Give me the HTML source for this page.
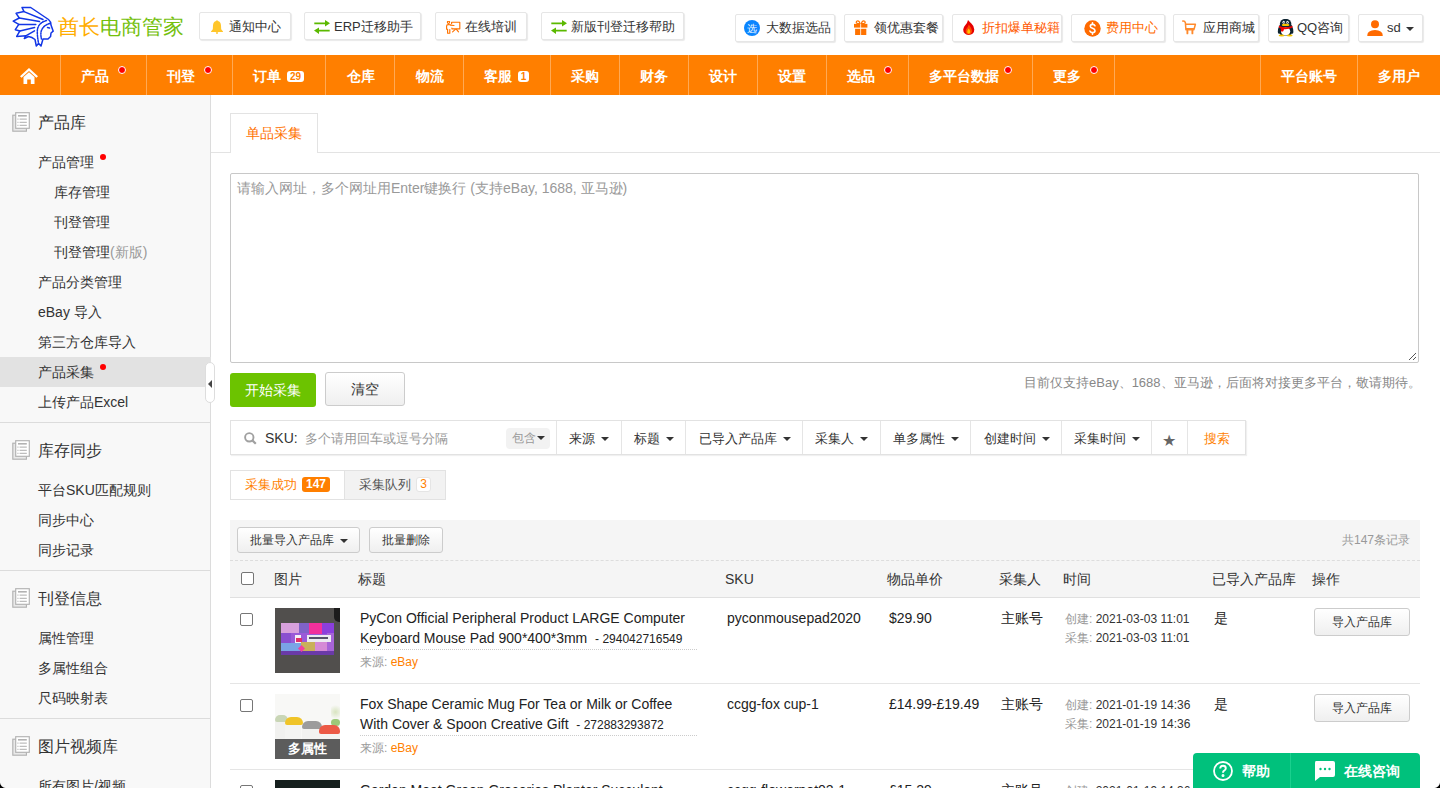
<!DOCTYPE html>
<html><head><meta charset="utf-8">
<style>
*{box-sizing:border-box;margin:0;padding:0}
html,body{width:1440px;height:788px;overflow:hidden;background:#fff;font-family:"Liberation Sans",sans-serif;color:#333}
.a{position:absolute}
.hb{position:absolute;height:28px;border:1px solid #e6e6e6;border-radius:2px;background:#fff;box-shadow:1px 1px 1px rgba(0,0,0,.09);font-size:13px;line-height:26px;color:#333;white-space:nowrap}
.hb .ic{position:absolute;top:0;bottom:0;margin:auto 0}
.hb .t{position:absolute;top:0}
.hl .t{top:1px}
#nav{position:absolute;left:0;top:55px;width:1440px;height:40px;background:#ff7f00}
.sep{position:absolute;top:0;width:1px;height:40px;background:#ffa954}
.nt{position:absolute;top:1px;line-height:40px;font-size:14px;font-weight:bold;color:#fff;white-space:nowrap}
.dot{position:absolute;width:8px;height:8px;border-radius:50%;background:#f00;border:1px solid #fff}
#side{position:absolute;left:0;top:95px;width:211px;height:693px;background:#f8f8f8;border-right:1px solid #dcdcdc}
.sh{position:absolute;left:38px;font-size:16px;color:#333;line-height:20px;white-space:nowrap}
.si{position:absolute;left:38px;font-size:14px;color:#333;line-height:20px;white-space:nowrap}
.si2{left:54px}
.sdiv{position:absolute;left:0;width:210px;height:1px;background:#dcdcdc}
.dd{position:absolute;top:422px;height:33px;line-height:33px;font-size:13px;color:#333;white-space:nowrap}
.caret{display:inline-block;width:0;height:0;border-left:4px solid transparent;border-right:4px solid transparent;border-top:4px solid #333;vertical-align:middle;margin-left:6px;position:relative;top:-1px}
.vs{position:absolute;top:421px;width:1px;height:33px;background:#e5e5e5}
.th{position:absolute;top:570px;font-size:14px;color:#333;line-height:18px;white-space:nowrap}
.cb{position:absolute;width:13px;height:13px;border:1px solid #767676;border-radius:2px;background:#fff}
.td{position:absolute;font-size:14px;color:#222;white-space:nowrap;line-height:20px}
.gb{position:absolute;border:1px solid #ccc;border-radius:3px;background:linear-gradient(#fff,#efefef);font-size:12px;color:#333;text-align:center;white-space:nowrap}
</style></head><body>

<!-- HEADER -->
<div id="hdr" class="a" style="left:0;top:0;width:1440px;height:55px;background:#fff">
  <svg class="a" style="left:10px;top:4px" width="48" height="46" viewBox="0 0 48 46" fill="none" stroke="#1236e6" stroke-width="1.5" stroke-linejoin="round" stroke-linecap="round">
<path d="M12 3.5 L20.7 3.5 L38.5 15.5 Q41 17.5 41 21 L43.2 27.2 L41 29 L40.6 32.5 L38 35 L33 35 L31 42 L28.6 39.5 L26.3 42 L25 35.5 Q22 33 18.5 32.5 L14.3 34.5 L15.8 31.8 L6.7 32.4 L9.9 26.9 L5.3 25.7 L8.8 20.4 L3.2 17.2 L9.3 14 L6.1 9.3 L14 7.6 Z"/>
<path d="M14 7.6 L33 15.5 M9.3 14 L29.5 17.5 M8.8 20.4 L25.8 20.5 M9.9 26.9 L24.6 23.6 M15.8 31.8 L24.5 26.8"/>
<path d="M36.5 16.6 Q29 18.5 27.5 25 Q26.8 30 28.6 39.5" stroke-dasharray="1.6 1.1"/>
<path d="M39.8 19.5 Q32.5 21.5 31 28 Q30.6 31.5 31.5 35" stroke-dasharray="1.6 1.1"/>
<path d="M37.5 23.5 L39.5 24"/>
</svg>
  <div class="a" style="left:58px;top:14px;font-size:21px;line-height:26px;white-space:nowrap"><span style="color:#ffad00">酋长</span><span style="color:#74c00c">电商管家</span></div>

  <div class="hb hl" style="left:199px;top:12px;width:92px">
    <svg class="a" style="left:11px;top:7px" width="12" height="14" viewBox="0 0 12 14"><path d="M6 0.2 Q6.8 0.2 6.9 1.1 Q9.8 1.7 10 5.5 L10.2 9.2 L12 11.6 V12 H0 V11.6 L1.8 9.2 L2 5.5 Q2.2 1.7 5.1 1.1 Q5.2 0.2 6 0.2 Z" fill="#ffc62b"/><path d="M4.8 12.2 H7.2 Q7.2 14 6 14 Q4.8 14 4.8 12.2Z" fill="#ffc62b"/></svg>
    <span class="t" style="left:29px">通知中心</span></div>
  <div class="hb hl" style="left:304px;top:12px;width:117px">
    <svg class="a" style="left:9px;top:7px" width="16" height="14" viewBox="0 0 16 14" fill="#5bb900"><path d="M0.3 2.6 H11 V0 L16 3.3 L11 6.4 V4.2 H0.3 Z M15.7 9.8 H5 V7.4 L0 10.6 L5 13.9 V11.4 H15.7 Z"/></svg>
    <span class="t" style="left:29px">ERP迁移助手</span></div>
  <div class="hb hl" style="left:435px;top:12px;width:92px">
    <svg class="a" style="left:10px;top:8px" width="15" height="13" viewBox="0 0 15 13" fill="none" stroke="#ff7300" stroke-width="1.15" stroke-linejoin="round" stroke-linecap="round"><circle cx="2.5" cy="1.3" r="1.1"/><path d="M4.6 3.8 L2.2 3.6 Q0.6 3.6 0.6 5 V8.2 H1.6 V12.2 H3.8 V8.6 M4.3 4.1 L8 4.5"/><path d="M5.6 2.8 V1.2 H13.8 V7.8 H5.9 V7"/><path d="M9.3 8.3 L6.6 10.9 M10.5 8.3 L12.5 10.9"/></svg>
    <span class="t" style="left:29px">在线培训</span></div>
  <div class="hb hl" style="left:541px;top:12px;width:143px">
    <svg class="a" style="left:9px;top:7px" width="16" height="14" viewBox="0 0 16 14" fill="#5bb900"><path d="M0.3 2.6 H11 V0 L16 3.3 L11 6.4 V4.2 H0.3 Z M15.7 9.8 H5 V7.4 L0 10.6 L5 13.9 V11.4 H15.7 Z"/></svg>
    <span class="t" style="left:29px">新版刊登迁移帮助</span></div>

  <div class="hb" style="left:735px;top:14px;width:100px">
    <svg class="a" style="left:8px;top:5px" width="16" height="16" viewBox="0 0 16 16"><circle cx="8" cy="8" r="8" fill="#0a85ff"/><text x="8.2" y="11.8" font-size="10" fill="#fff" text-anchor="middle">选</text></svg>
    <span class="t" style="left:30px">大数据选品</span></div>
  <div class="hb" style="left:844px;top:14px;width:99px">
    <svg class="a" style="left:9px;top:5px" width="14" height="15" viewBox="0 0 14 15" fill="#ff7300"><path d="M6.6 3.6 Q6 0.2 3.6 0.2 Q1.4 0.4 1.6 2.4 Q1.8 3.6 3.2 3.9 H6.6 Z M3.6 1.5 Q4.9 1.6 5.2 3 H3.7 Q2.7 2.8 2.8 2.1 Q2.9 1.5 3.6 1.5 Z"/><path d="M6.8 3.6 Q7.4 0.2 9.8 0.2 Q12 0.4 11.8 2.4 Q11.6 3.6 10.2 3.9 H6.8 Z M9.8 1.5 Q8.5 1.6 8.2 3 H9.7 Q10.7 2.8 10.6 2.1 Q10.5 1.5 9.8 1.5 Z"/><rect x="0" y="3.9" width="6.3" height="3.7"/><rect x="7.1" y="3.9" width="6.3" height="3.7"/><rect x="1.1" y="8.8" width="5.2" height="6.2"/><rect x="7.1" y="8.8" width="5.2" height="6.2"/></svg>
    <span class="t" style="left:29px">领优惠套餐</span></div>
  <div class="hb" style="left:952px;top:14px;width:110px;color:#ff5a00">
    <svg class="a" style="left:10px;top:5px" width="12" height="15" viewBox="0 0 12 15"><path d="M5 0 Q4.6 2.6 2.2 5.2 Q0.2 7.4 0.2 9.6 Q0.3 14.6 5.6 15 Q11.2 14.8 11.3 9.6 Q11.3 6.2 8.6 3.8 Q6.4 1.8 5 0 Z" fill="#e60000"/><path d="M5.8 4.4 Q5.2 6.6 3.6 8.4 Q2.4 9.8 2.6 11.4 Q3 14.4 5.7 14.4 Q8.8 14.3 9 11.2 Q9 8.6 5.8 4.4Z" fill="#ff4a00"/><path d="M5.7 8.6 Q4.2 10.6 4.2 12 Q4.4 13.8 5.7 13.8 Q7.2 13.8 7.3 12 Q7.3 10.6 5.7 8.6Z" fill="#ffc400"/></svg>
    <span class="t" style="left:29px">折扣爆单秘籍</span></div>
  <div class="hb" style="left:1071px;top:14px;width:94px;color:#ff6a00">
    <svg class="a" style="left:12px;top:5px" width="17" height="17" viewBox="0 0 17 17"><circle cx="8.5" cy="8.5" r="8.2" fill="#ff6a00"/><path d="M11 5.8 Q10.4 4.4 8.6 4.4 Q6.3 4.4 6.3 6.2 Q6.3 7.6 8.6 8.3 Q11 9 11 10.7 Q11 12.6 8.5 12.6 Q6.4 12.6 5.9 11.1 M8.5 2.8 V4.4 M8.5 12.6 V14.2" fill="none" stroke="#fff" stroke-width="1.6" stroke-linecap="round"/></svg>
    <span class="t" style="left:34px">费用中心</span></div>
  <div class="hb" style="left:1173px;top:14px;width:86px">
    <svg class="a" style="left:8px;top:5px" width="15" height="15" viewBox="0 0 15 15" fill="none" stroke="#ff8a2c" stroke-width="1.5" stroke-linejoin="round" stroke-linecap="round"><path d="M0.8 1.1 Q2.9 0.9 3.4 2.8 L3.9 9.8 H11.9 M3.7 4.3 H13.4 L12.2 8.8 H3.9"/><path d="M5.4 10.5 V13.4 M10.4 10.5 V13.4" stroke-width="1.9"/></svg>
    <span class="t" style="left:29px">应用商城</span></div>
  <div class="hb" style="left:1268px;top:14px;width:81px">
    <svg class="a" style="left:8px;top:4px" width="17" height="18" viewBox="0 0 17 18"><ellipse cx="8.6" cy="5" rx="5.8" ry="5.2" fill="#0e2430"/><path d="M2.6 6 Q0.8 9.5 0.8 13 Q1 15.2 2.4 14.6 Q3.4 16.8 8.6 16.8 Q13.8 16.8 14.8 14.6 Q16.2 15.2 16.4 13 Q16.4 9.5 14.6 6 Z" fill="#0e2430"/><ellipse cx="8.6" cy="12.4" rx="4.6" ry="4.1" fill="#fff"/><ellipse cx="6.7" cy="3.2" rx="1.2" ry="1.5" fill="#fff"/><ellipse cx="10.5" cy="3.2" rx="1.2" ry="1.5" fill="#fff"/><ellipse cx="6.9" cy="3.5" rx=".5" ry=".7" fill="#0e2430"/><ellipse cx="10.3" cy="3.5" rx=".5" ry=".7" fill="#0e2430"/><ellipse cx="8.6" cy="5.9" rx="3.8" ry="1.2" fill="#f5c400"/><path d="M1.8 6.8 Q8.6 9.8 15.4 6.8 L15.6 8.6 Q11 10.6 7 10.2 L6.4 12 Q5.6 13 4 12.2 L3.8 9.4 Q2.6 9 1.9 8.4 Z" fill="#f20000"/><ellipse cx="4.6" cy="16.5" rx="3" ry="1.1" fill="#f5c400"/><ellipse cx="12.6" cy="16.5" rx="3" ry="1.1" fill="#f5c400"/></svg>
    <span class="t" style="left:28px">QQ咨询</span></div>
  <div class="hb" style="left:1358px;top:14px;width:65px">
    <svg class="a" style="left:8px;top:5px" width="16" height="16" viewBox="0 0 16 16" fill="#ff6a00"><circle cx="8" cy="4.3" r="4"/><path d="M0.2 15.5 Q0.6 10.2 8 10.1 Q15.4 10.2 15.8 15.5 Q15.8 15.9 15.3 15.9 H0.7 Q0.2 15.9 0.2 15.5 Z"/></svg>
    <span class="t" style="left:28px">sd</span><span class="a" style="left:47px;top:12px;width:0;height:0;border-left:4px solid transparent;border-right:4px solid transparent;border-top:4px solid #333"></span></div>
</div>

<!-- NAV -->
<div id="nav">
<svg class="a" style="left:20px;top:13px" width="18" height="16" viewBox="0 0 18 16" fill="#fff"><path d="M9 0 L18 8.2 L16.4 9.8 L9 3 L1.6 9.8 L0 8.2 Z M3.5 9 L9 4.2 L14.5 9 V16 H10.8 V11.5 H7.2 V16 H3.5 Z"/></svg>
<div class="sep" style="left:60px"></div>
<div class="sep" style="left:146px"></div>
<div class="sep" style="left:232px"></div>
<div class="sep" style="left:325px"></div>
<div class="sep" style="left:394px"></div>
<div class="sep" style="left:463px"></div>
<div class="sep" style="left:550px"></div>
<div class="sep" style="left:619px"></div>
<div class="sep" style="left:688px"></div>
<div class="sep" style="left:757px"></div>
<div class="sep" style="left:826px"></div>
<div class="sep" style="left:908px"></div>
<div class="sep" style="left:1032px"></div>
<div class="sep" style="left:1114px"></div>
<div class="sep" style="left:1260px"></div>
<div class="sep" style="left:1357px"></div>
<div class="nt" style="left:81px">产品</div>
<div class="dot" style="left:118px;top:11px"></div>
<div class="nt" style="left:167px">刊登</div>
<div class="dot" style="left:204px;top:11px"></div>
<div class="nt" style="left:253px">订单</div>
<div class="nt" style="left:347px">仓库</div>
<div class="nt" style="left:416px">物流</div>
<div class="nt" style="left:484px">客服</div>
<div class="nt" style="left:571px">采购</div>
<div class="nt" style="left:640px">财务</div>
<div class="nt" style="left:709px">设计</div>
<div class="nt" style="left:778px">设置</div>
<div class="nt" style="left:847px">选品</div>
<div class="dot" style="left:884px;top:11px"></div>
<div class="nt" style="left:929px">多平台数据</div>
<div class="dot" style="left:1004px;top:11px"></div>
<div class="nt" style="left:1053px">更多</div>
<div class="dot" style="left:1090px;top:11px"></div>
<div class="nt" style="left:1281px">平台账号</div>
<div class="nt" style="left:1378px">多用户</div>
<div class="a" style="left:287px;top:16px;width:17px;height:11px;background:#fff;border-radius:3px;color:#ff7f00;font-size:10px;font-weight:bold;line-height:11px;text-align:center">29</div>
<div class="a" style="left:518px;top:16px;width:11px;height:11px;background:#fff;border-radius:3px;color:#ff7f00;font-size:10px;font-weight:bold;line-height:11px;text-align:center">1</div>
</div>
<!-- SIDEBAR -->
<div id="side">
<div class="a" style="left:0;top:262px;width:211px;height:30px;background:#e2e2e2"></div>
<svg class="a" style="left:12px;top:17px" width="19" height="21" viewBox="0 0 19 21" fill="none" stroke="#b2b2b2" stroke-width="1.15"><rect x="0.8" y="3.2" width="13.6" height="16" fill="#e9e9e9"/><rect x="3.7" y="0.7" width="13.6" height="15.6" fill="#fff"/><path d="M6 3.8 H14.8" stroke-width="1.6"/><path d="M5.4 7.2 H6.5 M7.6 7.2 H14.8 M5.4 10.3 H6.5 M7.6 10.3 H14.8 M5.4 13.4 H6.5 M7.6 13.4 H14.8" stroke="#bdbdbd" stroke-width="1.2"/></svg>
<div class="sh" style="top:18px">产品库</div>
<div class="si" style="top:57px">产品管理</div>
<div class="a" style="left:100px;top:59px;width:6px;height:6px;border-radius:50%;background:#f00"></div>
<div class="si si2" style="top:87px">库存管理</div>
<div class="si si2" style="top:117px">刊登管理</div>
<div class="si si2" style="top:147px">刊登管理<span style="color:#999">(新版)</span></div>
<div class="si" style="top:177px">产品分类管理</div>
<div class="si" style="top:207px">eBay 导入</div>
<div class="si" style="top:237px">第三方仓库导入</div>
<div class="si" style="top:267px">产品采集</div>
<div class="a" style="left:100px;top:269px;width:6px;height:6px;border-radius:50%;background:#f00"></div>
<div class="si" style="top:297px">上传产品Excel</div>
<div class="sdiv" style="top:327px"></div>
<svg class="a" style="left:12px;top:345px" width="19" height="21" viewBox="0 0 19 21" fill="none" stroke="#b2b2b2" stroke-width="1.15"><rect x="0.8" y="3.2" width="13.6" height="16" fill="#e9e9e9"/><rect x="3.7" y="0.7" width="13.6" height="15.6" fill="#fff"/><path d="M6 3.8 H14.8" stroke-width="1.6"/><path d="M5.4 7.2 H6.5 M7.6 7.2 H14.8 M5.4 10.3 H6.5 M7.6 10.3 H14.8 M5.4 13.4 H6.5 M7.6 13.4 H14.8" stroke="#bdbdbd" stroke-width="1.2"/></svg>
<div class="sh" style="top:346px">库存同步</div>
<div class="si" style="top:385px">平台SKU匹配规则</div>
<div class="si" style="top:415px">同步中心</div>
<div class="si" style="top:445px">同步记录</div>
<div class="sdiv" style="top:475px"></div>
<svg class="a" style="left:12px;top:493px" width="19" height="21" viewBox="0 0 19 21" fill="none" stroke="#b2b2b2" stroke-width="1.15"><rect x="0.8" y="3.2" width="13.6" height="16" fill="#e9e9e9"/><rect x="3.7" y="0.7" width="13.6" height="15.6" fill="#fff"/><path d="M6 3.8 H14.8" stroke-width="1.6"/><path d="M5.4 7.2 H6.5 M7.6 7.2 H14.8 M5.4 10.3 H6.5 M7.6 10.3 H14.8 M5.4 13.4 H6.5 M7.6 13.4 H14.8" stroke="#bdbdbd" stroke-width="1.2"/></svg>
<div class="sh" style="top:494px">刊登信息</div>
<div class="si" style="top:533px">属性管理</div>
<div class="si" style="top:563px">多属性组合</div>
<div class="si" style="top:593px">尺码映射表</div>
<div class="sdiv" style="top:623px"></div>
<svg class="a" style="left:12px;top:641px" width="19" height="21" viewBox="0 0 19 21" fill="none" stroke="#b2b2b2" stroke-width="1.15"><rect x="0.8" y="3.2" width="13.6" height="16" fill="#e9e9e9"/><rect x="3.7" y="0.7" width="13.6" height="15.6" fill="#fff"/><path d="M6 3.8 H14.8" stroke-width="1.6"/><path d="M5.4 7.2 H6.5 M7.6 7.2 H14.8 M5.4 10.3 H6.5 M7.6 10.3 H14.8 M5.4 13.4 H6.5 M7.6 13.4 H14.8" stroke="#bdbdbd" stroke-width="1.2"/></svg>
<div class="sh" style="top:642px">图片视频库</div>
<div class="si" style="top:681px">所有图片/视频</div>
<div class="a" style="left:205px;top:267px;width:10px;height:41px;background:#fff;border:1px solid #ddd;border-radius:5px"></div>
<div class="a" style="left:208px;top:285px;width:0;height:0;border-top:4px solid transparent;border-bottom:4px solid transparent;border-right:4px solid #444"></div>
</div>
<!-- MAIN -->
<div class="a" style="left:211px;top:152px;width:1229px;height:1px;background:#e3e3e3"></div>
<div class="a" style="left:230px;top:113px;width:88px;height:40px;background:#fff;border:1px solid #e3e3e3;border-bottom:none"></div>
<div class="a" style="left:246px;top:123px;font-size:14px;line-height:20px;color:#ff7200">单品采集</div>

<div class="a" style="left:230px;top:173px;width:1189px;height:190px;border:1px solid #c8c8c8;border-radius:2px;background:#fff"></div>
<div class="a" style="left:237px;top:178px;font-size:14px;line-height:20px;color:#999;white-space:nowrap">请输入网址，多个网址用Enter键换行 (支持eBay, 1688, 亚马逊)</div>
<svg class="a" style="left:1408px;top:352px" width="9" height="9" viewBox="0 0 9 9" stroke="#555" stroke-width="1"><path d="M1 8 L8 1 M5 8 L8 5"/></svg>

<div class="a" style="left:230px;top:373px;width:86px;height:34px;background:#6cc300;border-radius:3px;color:#fff;font-size:14px;line-height:34px;text-align:center">开始采集</div>
<div class="gb" style="left:325px;top:372px;width:80px;height:34px;line-height:32px;font-size:14px">清空</div>
<div class="a" style="left:1024px;top:373px;font-size:13px;line-height:20px;color:#888;white-space:nowrap">目前仅支持eBay、1688、亚马逊，后面将对接更多平台，敬请期待。</div>

<!-- search bar -->
<div class="a" style="left:230px;top:420px;width:1016px;height:35px;border:1px solid #e2e2e2;background:#fff;box-shadow:1px 1px 1px rgba(0,0,0,.06)"></div>
<svg class="a" style="left:244px;top:432px" width="13" height="13" viewBox="0 0 13 13" fill="none" stroke="#a0a0a0" stroke-width="1.9"><circle cx="5.3" cy="5.3" r="4.2"/><path d="M8.4 8.4 L11.8 11.8" stroke-width="2.2"/></svg>
<div class="dd" style="left:265px;font-size:14px">SKU:</div>
<div class="dd" style="left:305px;color:#999">多个请用回车或逗号分隔</div>
<div class="a" style="left:506px;top:428px;width:44px;height:21px;background:#f2f2f2;border-radius:4px;font-size:12px;line-height:21px;color:#999;padding-left:6px;white-space:nowrap">包含<span class="caret" style="margin-left:1px;border-top-color:#333"></span></div>
<div class="vs" style="left:556px"></div>
<div class="dd" style="left:569px">来源<span class="caret"></span></div>
<div class="vs" style="left:621px"></div>
<div class="dd" style="left:634px">标题<span class="caret"></span></div>
<div class="vs" style="left:685px"></div>
<div class="dd" style="left:699px">已导入产品库<span class="caret"></span></div>
<div class="vs" style="left:802px"></div>
<div class="dd" style="left:815px">采集人<span class="caret"></span></div>
<div class="vs" style="left:880px"></div>
<div class="dd" style="left:893px">单多属性<span class="caret"></span></div>
<div class="vs" style="left:970px"></div>
<div class="dd" style="left:984px">创建时间<span class="caret"></span></div>
<div class="vs" style="left:1061px"></div>
<div class="dd" style="left:1074px">采集时间<span class="caret"></span></div>
<div class="vs" style="left:1151px"></div>
<div class="dd" style="left:1162px;top:424px;font-size:16px;color:#666">★</div>
<div class="vs" style="left:1187px"></div>
<div class="dd" style="left:1204px;color:#ff7f00">搜索</div>

<!-- status tabs -->
<div class="a" style="left:230px;top:470px;width:216px;height:30px;border:1px solid #e2e2e2;background:#f2f2f2"></div>
<div class="a" style="left:231px;top:471px;width:114px;height:28px;background:#fff;border-right:1px solid #e2e2e2"></div>
<div class="a" style="left:245px;top:475px;font-size:13px;line-height:20px;color:#ff7f00;white-space:nowrap">采集成功</div>
<div class="a" style="left:302px;top:477px;width:28px;height:15px;border-radius:3px;background:#ff7f00;color:#fff;font-size:12px;font-weight:bold;line-height:15px;text-align:center">147</div>
<div class="a" style="left:359px;top:475px;font-size:13px;line-height:20px;color:#555;white-space:nowrap">采集队列</div>
<div class="a" style="left:416px;top:477px;width:15px;height:15px;border-radius:3px;background:#fff;border:1px solid #e5e5e5;color:#ff7f00;font-size:12px;line-height:13px;text-align:center">3</div>

<!-- table -->
<div class="a" style="left:230px;top:520px;width:1190px;height:78px;background:#f5f5f5"></div>
<div class="a" style="left:230px;top:560px;width:1190px;height:0;border-top:1px dashed #ddd"></div>
<div class="a" style="left:230px;top:597px;width:1190px;height:1px;background:#e0e0e0"></div>
<div class="gb" style="left:237px;top:527px;width:123px;height:26px;line-height:25px;text-align:left;padding-left:12px">批量导入产品库<span class="caret" style="margin-left:6px;top:0"></span></div>
<div class="gb" style="left:369px;top:527px;width:74px;height:26px;line-height:25px">批量删除</div>
<div class="a" style="left:1342px;top:531px;font-size:12px;line-height:18px;color:#999;white-space:nowrap">共147条记录</div>

<div class="cb" style="left:241px;top:572px"></div>
<div class="th" style="left:274px">图片</div>
<div class="th" style="left:358px">标题</div>
<div class="th" style="left:725px">SKU</div>
<div class="th" style="left:887px">物品单价</div>
<div class="th" style="left:999px">采集人</div>
<div class="th" style="left:1063px">时间</div>
<div class="th" style="left:1212px">已导入产品库</div>
<div class="th" style="left:1312px">操作</div>

<!-- ROWS -->
<div class="a" style="left:230px;top:683px;width:1190px;height:1px;background:#e5e5e5"></div>
<div class="cb" style="left:240px;top:613px"></div>
<div class="a" style="left:275px;top:608px;width:65px;height:65px;background:#514f4d;overflow:hidden">
<div class="a" style="left:59px;top:0;width:6px;height:14px;background:#1c1c1c;border-radius:0 0 0 5px"></div>
<div class="a" style="left:6px;top:15px;width:53px;height:32px;background:#9a5ad8"></div>
<div class="a" style="left:6px;top:15px;width:18px;height:10px;background:#d7a0dc"></div>
<div class="a" style="left:24px;top:15px;width:10px;height:10px;background:#7f62c8"></div>
<div class="a" style="left:34px;top:15px;width:13px;height:11px;background:#f2309c"></div>
<div class="a" style="left:47px;top:15px;width:12px;height:11px;background:#8b3fdc"></div>
<div class="a" style="left:6px;top:25px;width:10px;height:10px;background:#8a4fd0"></div>
<div class="a" style="left:6px;top:35px;width:20px;height:9px;background:#7aa4e6"></div>
<div class="a" style="left:26px;top:34px;width:14px;height:9px;background:#c9b05a"></div>
<div class="a" style="left:40px;top:34px;width:12px;height:9px;background:#d58ad6"></div>
<div class="a" style="left:52px;top:25px;width:7px;height:18px;background:#a764d8"></div>
<div class="a" style="left:6px;top:43px;width:53px;height:4px;background:#6a3aa8"></div>
<div class="a" style="left:20px;top:27px;width:6px;height:8px;background:#f4f0f8"></div>
<div class="a" style="left:21px;top:30px;width:6px;height:4px;background:#e0306a"></div>
<div class="a" style="left:32px;top:27px;width:24px;height:7px;background:#ecebf2"></div>
<div class="a" style="left:34px;top:29px;width:19px;height:2px;background:#55506a"></div>
<div class="a" style="left:24px;top:38px;width:5px;height:5px;background:#f040a0;transform:rotate(45deg)"></div>
</div>
<div class="td" style="left:360px;top:608px;line-height:20px">PyCon Official Peripheral Product LARGE Computer<br>Keyboard Mouse Pad 900*400*3mm&nbsp;&nbsp;<span style="font-size:12px">- 294042716549</span></div>
<div class="a" style="left:360px;top:649px;width:337px;height:0;border-top:1px dotted #ccc"></div>
<div class="a" style="left:360px;top:653px;font-size:12px;line-height:18px;color:#999;white-space:nowrap">来源: <span style="color:#ff7f00">eBay</span></div>
<div class="td" style="left:727px;top:608px">pyconmousepad2020</div>
<div class="td" style="left:889px;top:608px">$29.90</div>
<div class="td" style="left:1001px;top:608px">主账号</div>
<div class="a" style="left:1065px;top:610px;font-size:12px;line-height:19px;color:#333;white-space:nowrap"><span style="color:#999">创建:</span> 2021-03-03 11:01<br><span style="color:#999">采集:</span> 2021-03-03 11:01</div>
<div class="td" style="left:1214px;top:608px">是</div>
<div class="gb" style="left:1314px;top:608px;width:96px;height:28px;line-height:26px">导入产品库</div>
<div class="a" style="left:230px;top:769px;width:1190px;height:1px;background:#e5e5e5"></div>
<div class="cb" style="left:240px;top:699px"></div>
<div class="a" style="left:275px;top:694px;width:65px;height:65px;background:#f8f8f6;overflow:hidden">
<div class="a" style="left:56px;top:9px;width:9px;height:18px;background:radial-gradient(circle,#d8e4c0 0,#f8f8f6 70%)"></div>
<div class="a" style="left:0;top:27px;width:13px;height:20px;background:#f1f1ef"></div>
<div class="a" style="left:0;top:21px;width:13px;height:7px;background:#c9d6b6;border-radius:5px 5px 2px 2px"></div>
<div class="a" style="left:10px;top:30px;width:16px;height:20px;background:#f4f4f2"></div>
<div class="a" style="left:10px;top:23px;width:18px;height:8px;background:#f0c428;border-radius:6px 6px 2px 2px"></div>
<div class="a" style="left:27px;top:34px;width:18px;height:16px;background:#f2f2f0"></div>
<div class="a" style="left:27px;top:27px;width:20px;height:8px;background:#9c9c9c;border-radius:6px 6px 2px 2px"></div>
<div class="a" style="left:56px;top:25px;width:9px;height:7px;background:#9cc878;border-radius:4px"></div>
<div class="a" style="left:45px;top:38px;width:20px;height:12px;background:#f4f4f2"></div>
<div class="a" style="left:44px;top:31px;width:21px;height:9px;background:#ec5a46;border-radius:6px 6px 2px 2px"></div>

<div class="a" style="left:0;top:45px;width:65px;height:20px;background:#5c5c5c;color:#fff;font-size:13px;font-weight:bold;line-height:20px;text-align:center">多属性</div></div>
<div class="td" style="left:360px;top:694px;line-height:20px">Fox Shape Ceramic Mug For Tea or Milk or Coffee<br>With Cover &amp; Spoon Creative Gift&nbsp;&nbsp;<span style="font-size:12px">- 272883293872</span></div>
<div class="a" style="left:360px;top:735px;width:337px;height:0;border-top:1px dotted #ccc"></div>
<div class="a" style="left:360px;top:739px;font-size:12px;line-height:18px;color:#999;white-space:nowrap">来源: <span style="color:#ff7f00">eBay</span></div>
<div class="td" style="left:727px;top:694px">ccgg-fox cup-1</div>
<div class="td" style="left:889px;top:694px">£14.99-£19.49</div>
<div class="td" style="left:1001px;top:694px">主账号</div>
<div class="a" style="left:1065px;top:696px;font-size:12px;line-height:19px;color:#333;white-space:nowrap"><span style="color:#999">创建:</span> 2021-01-19 14:36<br><span style="color:#999">采集:</span> 2021-01-19 14:36</div>
<div class="td" style="left:1214px;top:694px">是</div>
<div class="gb" style="left:1314px;top:694px;width:96px;height:28px;line-height:26px">导入产品库</div>
<div class="a" style="left:230px;top:855px;width:1190px;height:1px;background:#e5e5e5"></div>
<div class="cb" style="left:240px;top:785px"></div>
<div class="a" style="left:275px;top:780px;width:65px;height:65px;background:#16201e"></div>
<div class="td" style="left:360px;top:780px;line-height:20px">Garden Meat Green Groceries Planter Succulent<br>Pot&nbsp;&nbsp;<span style="font-size:12px">- 272883293871</span></div>
<div class="a" style="left:360px;top:821px;width:337px;height:0;border-top:1px dotted #ccc"></div>
<div class="a" style="left:360px;top:825px;font-size:12px;line-height:18px;color:#999;white-space:nowrap">来源: <span style="color:#ff7f00">eBay</span></div>
<div class="td" style="left:727px;top:780px">ccgg-flowerpot02-1</div>
<div class="td" style="left:889px;top:780px">£15.29</div>
<div class="td" style="left:1001px;top:780px">主账号</div>
<div class="a" style="left:1065px;top:782px;font-size:12px;line-height:19px;color:#333;white-space:nowrap"><span style="color:#999">创建:</span> 2021-01-19 14:36<br><span style="color:#999">采集:</span> 2021-01-19 14:36</div>
<div class="td" style="left:1214px;top:780px">是</div>
<div class="gb" style="left:1314px;top:780px;width:96px;height:28px;line-height:26px">导入产品库</div>
<!-- HELP -->
<div class="a" style="left:1193px;top:753px;width:227px;height:40px;background:#00c17c;border-radius:4px 4px 0 0"></div>
<div class="a" style="left:1290px;top:753px;width:1px;height:35px;background:#1ad08e"></div>
<svg class="a" style="left:1213px;top:761px" width="20" height="20" viewBox="0 0 20 20" fill="none" stroke="#fff" stroke-width="1.8"><circle cx="10" cy="10" r="9"/><path d="M7.2 7.6 Q7.2 4.8 10 4.8 Q12.8 4.8 12.8 7.3 Q12.8 9 10.9 9.8 Q10 10.3 10 11.8" stroke-width="1.9"/><circle cx="10" cy="14.6" r="0.6" fill="#fff"/></svg>
<div class="a" style="left:1242px;top:761px;font-size:14px;line-height:20px;font-weight:bold;color:#fff">帮助</div>
<svg class="a" style="left:1314px;top:761px" width="21" height="20" viewBox="0 0 21 20"><path d="M2 0 H19 Q21 0 21 2 V14 Q21 16 19 16 H6 L1 20 V2 Q1 0 2 0 Z" fill="#fff"/><circle cx="6.5" cy="8" r="1.2" fill="#00c17c"/><circle cx="11" cy="8" r="1.2" fill="#00c17c"/><circle cx="15.5" cy="8" r="1.2" fill="#00c17c"/></svg>
<div class="a" style="left:1344px;top:761px;font-size:14px;line-height:20px;font-weight:bold;color:#fff">在线咨询</div>
<!-- window corners -->
<div class="a" style="left:0;top:782px;width:6px;height:6px;background:radial-gradient(circle at 6px 0,transparent 5.5px,#000 6.5px)"></div>
<div class="a" style="left:1434px;top:782px;width:6px;height:6px;background:radial-gradient(circle at 0 0,transparent 5.5px,#000 6.5px)"></div>

</body></html>
